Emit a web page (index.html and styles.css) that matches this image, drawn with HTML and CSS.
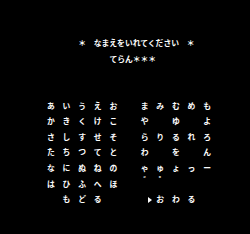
FILE: index.html
```html
<!DOCTYPE html>
<html lang="ja">
<head>
    <meta charset="UTF-8">
    <title>なまえ</title>
    <link rel="stylesheet" href="styles.css">
</head>
<body>
    <div class="screen">
        <div class="prompt">＊　なまえをいれてください　＊</div>
        <div class="entry">てらん＊＊＊</div>

        <div class="board">
            <div class="row">
                <span class="k">あ</span><span class="k">い</span><span class="k">う</span><span class="k">え</span><span class="k">お</span>
                <span class="k"></span>
                <span class="k">ま</span><span class="k">み</span><span class="k">む</span><span class="k">め</span><span class="k">も</span>
            </div>
            <div class="row">
                <span class="k">か</span><span class="k">き</span><span class="k">く</span><span class="k">け</span><span class="k">こ</span>
                <span class="k"></span>
                <span class="k">や</span><span class="k"></span><span class="k">ゆ</span><span class="k"></span><span class="k">よ</span>
            </div>
            <div class="row">
                <span class="k">さ</span><span class="k">し</span><span class="k">す</span><span class="k">せ</span><span class="k">そ</span>
                <span class="k"></span>
                <span class="k">ら</span><span class="k">り</span><span class="k">る</span><span class="k">れ</span><span class="k">ろ</span>
            </div>
            <div class="row">
                <span class="k">た</span><span class="k">ち</span><span class="k">つ</span><span class="k">て</span><span class="k">と</span>
                <span class="k"></span>
                <span class="k">わ</span><span class="k"></span><span class="k">を</span><span class="k"></span><span class="k">ん</span>
            </div>
            <div class="row">
                <span class="k">な</span><span class="k">に</span><span class="k">ぬ</span><span class="k">ね</span><span class="k">の</span>
                <span class="k"></span>
                <span class="k">ゃ<b class="mark">゛</b></span><span class="k">ゅ<b class="mark">゜</b></span><span class="k">ょ</span><span class="k">っ</span><span class="k">ー</span>
            </div>
            <div class="row">
                <span class="k">は</span><span class="k">ひ</span><span class="k">ふ</span><span class="k">へ</span><span class="k">ほ</span>
            </div>
            <div class="row">
                <span class="k"></span>
                <span class="k">も</span><span class="k">ど</span><span class="k">る</span>
                <span class="k"></span><span class="k"></span>
                <span class="k cursor-cell"><i class="cursor"></i></span>
                <span class="k">お</span><span class="k">わ</span><span class="k">る</span>
            </div>
        </div>
    </div>
</body>
</html>
```

FILE: styles.css
```css
/* one NES tile = 8px scaled to 250/256 */
body {
    margin: 0;
    background-color: #000;
}
.screen {
    width: 250px;
    height: 234px;
    padding-top: 39.0625px;
    box-sizing: border-box;
    overflow: hidden;
    color: #fcfcfc;
    font-family: "Noto Sans CJK JP", sans-serif;
    font-size: 7.8125px;
    line-height: 7.8125px;
    font-weight: bold;
}
.prompt {
    padding-left: 78.125px;
    height: 15.625px;
    white-space: pre;
}
.entry {
    padding-left: 109.375px;
    height: 7.8125px;
    margin-bottom: 39.0625px;
    white-space: pre;
}
.board {
    padding-left: 46.875px;
}
.row {
    display: flex;
    height: 15.625px;
}
.k {
    width: 15.625px;
    flex-shrink: 0;
}
/* dakuten / handakuten sit in the tile row under ゃ ゅ */
.mark {
    display: block;
    padding-top: 4.5px;
    padding-left: 2.5px;
    font-weight: bold;
}
.cursor-cell {
    display: flex;
    justify-content: flex-end;
    padding-top: 1.5px;
    box-sizing: border-box;
}
.cursor {
    width: 0;
    height: 0;
    margin-right: 4px;
    border-left: 4px solid #fcfcfc;
    border-top: 3px solid transparent;
    border-bottom: 3px solid transparent;
}
```
